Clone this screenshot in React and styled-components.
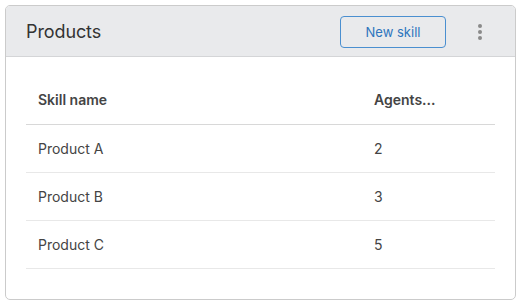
import React from "react";
import styled, { createGlobalStyle } from "styled-components";

const Global = createGlobalStyle`
  html, body { margin: 0; padding: 0; background: #ffffff; }
  body { font-family: Inter, "Noto Sans", sans-serif; -webkit-font-smoothing: antialiased; }
  * { box-sizing: border-box; }
`;

const Page = styled.div`
  padding: 5px 6px 0 5px;
`;

const Card = styled.section`
  width: 511px;
  height: 295px;
  border: 1px solid #cbcbcb;
  border-radius: 5px;
  overflow: hidden;
  display: flex;
  flex-direction: column;
  background: #fff;
`;

const Header = styled.header`
  height: 51px;
  flex: none;
  background: #e9eaec;
  border-bottom: 1px solid #d4d5d7;
  display: flex;
  align-items: center;
  padding: 0 32px 0 20px;
`;

const Title = styled.h2`
  margin: 0;
  flex: 1;
  font-size: 18px;
  font-weight: 400;
  color: #333;
  letter-spacing: -0.1px;
`;

const OutlineButton = styled.button`
  width: 106px;
  height: 32px;
  border: 1px solid #4a8fd0;
  border-radius: 4px;
  background: transparent;
  color: #2e75bd;
  font-family: inherit;
  font-size: 13px;
  margin-right: 31px;
  margin-top: 1px;
`;

const Kebab = styled.div`
  width: 6px;
  display: flex;
  flex-direction: column;
  align-items: center;
  gap: 2px;
  margin-top: 2px;
`;

const Dot = styled.span`
  width: 4px;
  height: 4px;
  border-radius: 50%;
  background: #8a8a8a;
`;

const Body = styled.div`
  padding: 19px 20px 0 20px;
`;

const Table = styled.table`
  width: 100%;
  border-collapse: collapse;
  table-layout: fixed;
  font-size: 14px;
  color: #444;
`;

const Th = styled.th`
  text-align: left;
  font-weight: 600;
  height: 48px;
  padding: 0 12px;
  border-bottom: 1px solid #d8d8d8;
  width: ${(p) => p.$w || "auto"};
  color: #444;
`;

const Td = styled.td`
  height: 48px;
  padding: 0 12px;
  border-bottom: 1px solid #e8e8e8;
  color: #444;
`;

const rows = [
  { name: "Product A", agents: 2 },
  { name: "Product B", agents: 3 },
  { name: "Product C", agents: 5 },
];

export default function App() {
  return (
    <>
      <Global />
      <Page>
        <Card>
          <Header>
            <Title>Products</Title>
            <OutlineButton>New skill</OutlineButton>
            <Kebab>
              <Dot />
              <Dot />
              <Dot />
            </Kebab>
          </Header>
          <Body>
            <Table>
              <thead>
                <tr>
                  <Th $w="336px">Skill name</Th>
                  <Th>Agents...</Th>
                </tr>
              </thead>
              <tbody>
                {rows.map((r) => (
                  <tr key={r.name}>
                    <Td>{r.name}</Td>
                    <Td>{r.agents}</Td>
                  </tr>
                ))}
              </tbody>
            </Table>
          </Body>
        </Card>
      </Page>
    </>
  );
}
